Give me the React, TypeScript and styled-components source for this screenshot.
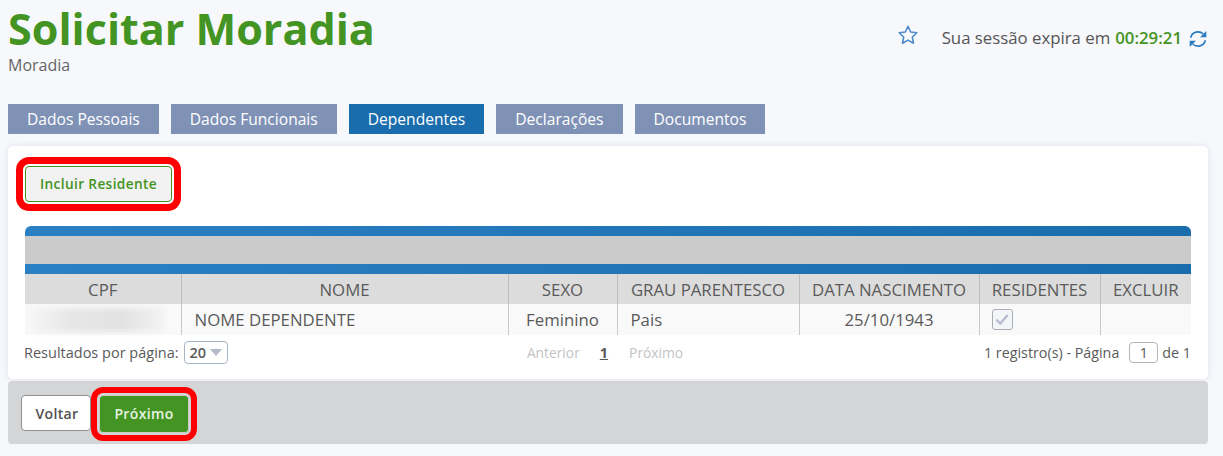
import React from 'react';
import styled, { createGlobalStyle } from 'styled-components';

const GlobalStyle = createGlobalStyle`
  html, body {
    margin: 0;
    padding: 0;
    background: #f7f8fc;
    font-family: "Open Sans", "Liberation Sans", sans-serif;
    color: #555;
  }
  * { box-sizing: border-box; }
`;

const Page = styled.div`
  width: 1223px;
  height: 456px;
  padding: 0 15px 0 8px;
  overflow: hidden;
`;

const Header = styled.header`
  height: 104px;
  display: flex;
  justify-content: space-between;
  align-items: flex-start;
`;

const TitleBlock = styled.div`
  display: flex;
  flex-direction: column;
`;

const Title = styled.h1`
  margin: 0;
  padding-top: 4px;
  font-size: 43.1px;
  line-height: 50px;
  font-weight: 700;
  color: #439423;
`;

const Subtitle = styled.div`
  font-size: 16px;
  line-height: 22px;
  color: #666;
`;

const Session = styled.div`
  display: flex;
  align-items: center;
  height: 30px;
  margin-top: 22px;
  font-size: 16.8px;
  color: #555;
`;

const StarIcon = styled.svg`
  width: 22px;
  height: 22px;
  margin-right: 23px;
  margin-top: -5px;
  fill: none;
  stroke: #4e8ac8;
  stroke-width: 1.7;
  stroke-linejoin: round;
`;

const Timer = styled.strong`
  margin-left: 5px;
  font-weight: 600;
  color: #439423;
`;

const RefreshIcon = styled.svg`
  width: 20px;
  height: 20px;
  margin-left: 6px;
  margin-top: 3px;
  fill: #2b7cc0;
  stroke: #2b7cc0;
`;

const Tabs = styled.nav`
  display: flex;
  gap: 12px;
  height: 30px;
`;

const Tab = styled.div<{ $active?: boolean }>`
  display: flex;
  align-items: center;
  padding: 0 19px;
  font-size: 15.6px;
  color: #fff;
  background: ${p => (p.$active ? '#196dad' : '#7f92b6')};
`;

const Card = styled.section`
  margin-top: 12px;
  height: 233px;
  padding: 20px 17px 0;
  background: #fff;
  border-radius: 5px;
  box-shadow: 0 0 6px rgba(180, 185, 200, 0.35);
`;

const IncludeButton = styled.button`
  display: block;
  width: 147px;
  height: 36px;
  padding: 0 0 2px;
  background: #f2f2f2;
  border: 1px solid #439423;
  border-radius: 4px;
  font-family: inherit;
  font-size: 13.7px;
  font-weight: 600;
  letter-spacing: 0.35px;
  color: #439423;
  outline: 7px solid #ff0000;
  outline-offset: 2px;
`;

const TableWrap = styled.div`
  margin-top: 24px;
`;

const BlueBar = styled.div<{ $top?: boolean }>`
  height: 10px;
  background: linear-gradient(90deg, #2b80c4, #196dad);
  border-radius: ${p => (p.$top ? '6px 6px 0 0' : '0')};
`;

const GreyBar = styled.div`
  height: 28px;
  background: #cbcbcb;
`;

const Table = styled.table`
  width: 100%;
  table-layout: fixed;
  border-collapse: collapse;
`;

const HeadCell = styled.th`
  height: 30px;
  padding: 0;
  font-size: 16.8px;
  font-weight: 400;
  text-align: center;
  color: #5a5a5a;
  background: #dcdcdc;
  border-left: 1px solid #bdbdbd;
  &:first-child { border-left: 0; }
`;

const Cell = styled.td<{ $left?: boolean; $indent?: number }>`
  height: 31px;
  padding: 1px 0 0 ${p => p.$indent ?? 0}px;
  font-size: 16.8px;
  line-height: 1;
  text-align: ${p => (p.$left ? 'left' : 'center')};
  color: #5a5a5a;
  background: #f9f9f9;
  border-left: 1px solid #c8c8c8;
  &:first-child { border-left: 0; padding-top: 0; }
`;

const BlurredCpf = styled.div`
  width: 134px;
  height: 24px;
  margin-left: 5px;
  background: linear-gradient(90deg, #f5f5f5, #e6e6e6 30%, #e2e2e2 70%, #f3f3f3);
  filter: blur(3px);
`;

const Check = styled.span`
  display: inline-flex;
  align-items: center;
  justify-content: center;
  width: 21px;
  height: 21px;
  margin-top: -2px;
  vertical-align: middle;
  border: 1px solid #a9adb6;
  border-radius: 3px;
  background: #f4f5f7;
`;

const CheckIcon = styled.svg`
  width: 16px;
  height: 16px;
  fill: none;
  stroke: #b4bccd;
  stroke-width: 2;
`;

const Pager = styled.div`
  display: grid;
  grid-template-columns: 1fr auto 1fr;
  align-items: center;
  height: 36px;
  font-size: 14.5px;
  color: #5a5a5a;
  padding-bottom: 1px;
`;

const PerPage = styled.div`
  display: flex;
  align-items: center;
  gap: 5px;
  margin-left: -1px;
`;

const PerPageBox = styled.div`
  display: flex;
  align-items: center;
  gap: 4px;
  width: 44px;
  height: 23px;
  padding-left: 5px;
  font-weight: 600;
  border: 1px solid #a9b4c6;
  border-radius: 4px;
`;

const Caret = styled.span`
  width: 0;
  height: 0;
  border-left: 6px solid transparent;
  border-right: 6px solid transparent;
  border-top: 7px solid #b4bac6;
`;

const PageLinks = styled.div`
  display: flex;
  align-items: center;
  margin-right: 6px;
  font-size: 13.8px;
  color: #c4c4c4;
`;

const CurrentPage = styled.span`
  margin: 0 21px 0 20px;
  font-weight: 700;
  font-size: 14.5px;
  color: #5a5a5a;
  text-decoration: underline;
`;

const PageInfo = styled.div`
  display: flex;
  align-items: center;
  justify-content: flex-end;
  gap: 4px;
  font-size: 14.3px;
`;

const PageBox = styled.div`
  width: 29px;
  height: 21px;
  margin-left: 6px;
  line-height: 19px;
  text-align: center;
  border: 1px solid #b5b5b5;
  border-radius: 4px;
`;

const Footer = styled.footer`
  display: flex;
  align-items: center;
  gap: 8px;
  margin-top: 2px;
  height: 63px;
  padding: 1px 0 0 13px;
  background: #d4d5d7;
  border-radius: 4px;
`;

const FooterButton = styled.button<{ $primary?: boolean }>`
  height: ${p => (p.$primary ? '38px' : '36px')};
  width: ${p => (p.$primary ? '90px' : '70px')};
  padding: ${p => (p.$primary ? '0' : '0 0 0 2px')};
  font-family: inherit;
  font-size: 14px;
  font-weight: 600;
  letter-spacing: 0.35px;
  border-radius: 4px;
  color: ${p => (p.$primary ? '#e9f2e4' : '#505050')};
  background: ${p => (p.$primary ? '#439423' : '#fff')};
  border: 1px solid ${p => (p.$primary ? '#c9cfc6' : '#8f8f8f')};
  ${p => p.$primary && 'outline: 6.5px solid #ff0000; outline-offset: 2px; margin-top: 1px;'}
`;

const columns = [
  { label: 'CPF', width: 156 },
  { label: 'NOME', width: 327 },
  { label: 'SEXO', width: 109 },
  { label: 'GRAU PARENTESCO', width: 182 },
  { label: 'DATA NASCIMENTO', width: 180 },
  { label: 'RESIDENTES', width: 121 },
  { label: 'EXCLUIR', width: 91 },
];

const tabs = ['Dados Pessoais', 'Dados Funcionais', 'Dependentes', 'Declarações', 'Documentos'];

const App: React.FC = () => (
  <>
    <GlobalStyle />
    <Page>
      <Header>
        <TitleBlock>
          <Title>Solicitar Moradia</Title>
          <Subtitle>Moradia</Subtitle>
        </TitleBlock>
        <Session>
          <StarIcon viewBox="0 0 24 24">
            <path d="M12 2.500l2.900 6.200 6.800.8-5 4.700 1.300 6.800-6-3.400-6 3.400 1.300-6.800-5-4.700 6.800-.8z" />
          </StarIcon>
          Sua sessão expira em
          <Timer>00:29:21</Timer>
          <RefreshIcon viewBox="0 0 24 24">
            <path fill="none" strokeWidth="2" d="M3.200 10.500A9 9 0 0 1 18.300 6" />
            <path stroke="none" d="M22 2.500v7.500h-7.500z" />
            <path fill="none" strokeWidth="2" d="M20.800 13.500A9 9 0 0 1 5.700 18" />
            <path stroke="none" d="M2 21.500V14h7.500z" />
          </RefreshIcon>
        </Session>
      </Header>

      <Tabs>
        {tabs.map(tab => (
          <Tab key={tab} $active={tab === 'Dependentes'}>{tab}</Tab>
        ))}
      </Tabs>

      <Card>
        <IncludeButton>Incluir Residente</IncludeButton>
        <TableWrap>
          <BlueBar $top />
          <GreyBar />
          <BlueBar />
          <Table>
            <colgroup>
              {columns.map(col => <col key={col.label} width={col.width} />)}
            </colgroup>
            <thead>
              <tr>
                {columns.map(col => <HeadCell key={col.label}>{col.label}</HeadCell>)}
              </tr>
            </thead>
            <tbody>
              <tr>
                <Cell><BlurredCpf /></Cell>
                <Cell $left $indent={13}>NOME DEPENDENTE</Cell>
                <Cell>Feminino</Cell>
                <Cell $left $indent={13}>Pais</Cell>
                <Cell>25/10/1943</Cell>
                <Cell $left $indent={12}>
                  <Check>
                    <CheckIcon viewBox="0 0 14 14"><path d="M2 7.500l3.500 3.500L12 3.500" /></CheckIcon>
                  </Check>
                </Cell>
                <Cell />
              </tr>
            </tbody>
          </Table>
          <Pager>
            <PerPage>
              Resultados por página:
              <PerPageBox>20<Caret /></PerPageBox>
            </PerPage>
            <PageLinks>
              Anterior
              <CurrentPage>1</CurrentPage>
              Próximo
            </PageLinks>
            <PageInfo>
              1 registro(s) - Página
              <PageBox>1</PageBox>
              de 1
            </PageInfo>
          </Pager>
        </TableWrap>
      </Card>

      <Footer>
        <FooterButton>Voltar</FooterButton>
        <FooterButton $primary>Próximo</FooterButton>
      </Footer>
    </Page>
  </>
);

export default App;
